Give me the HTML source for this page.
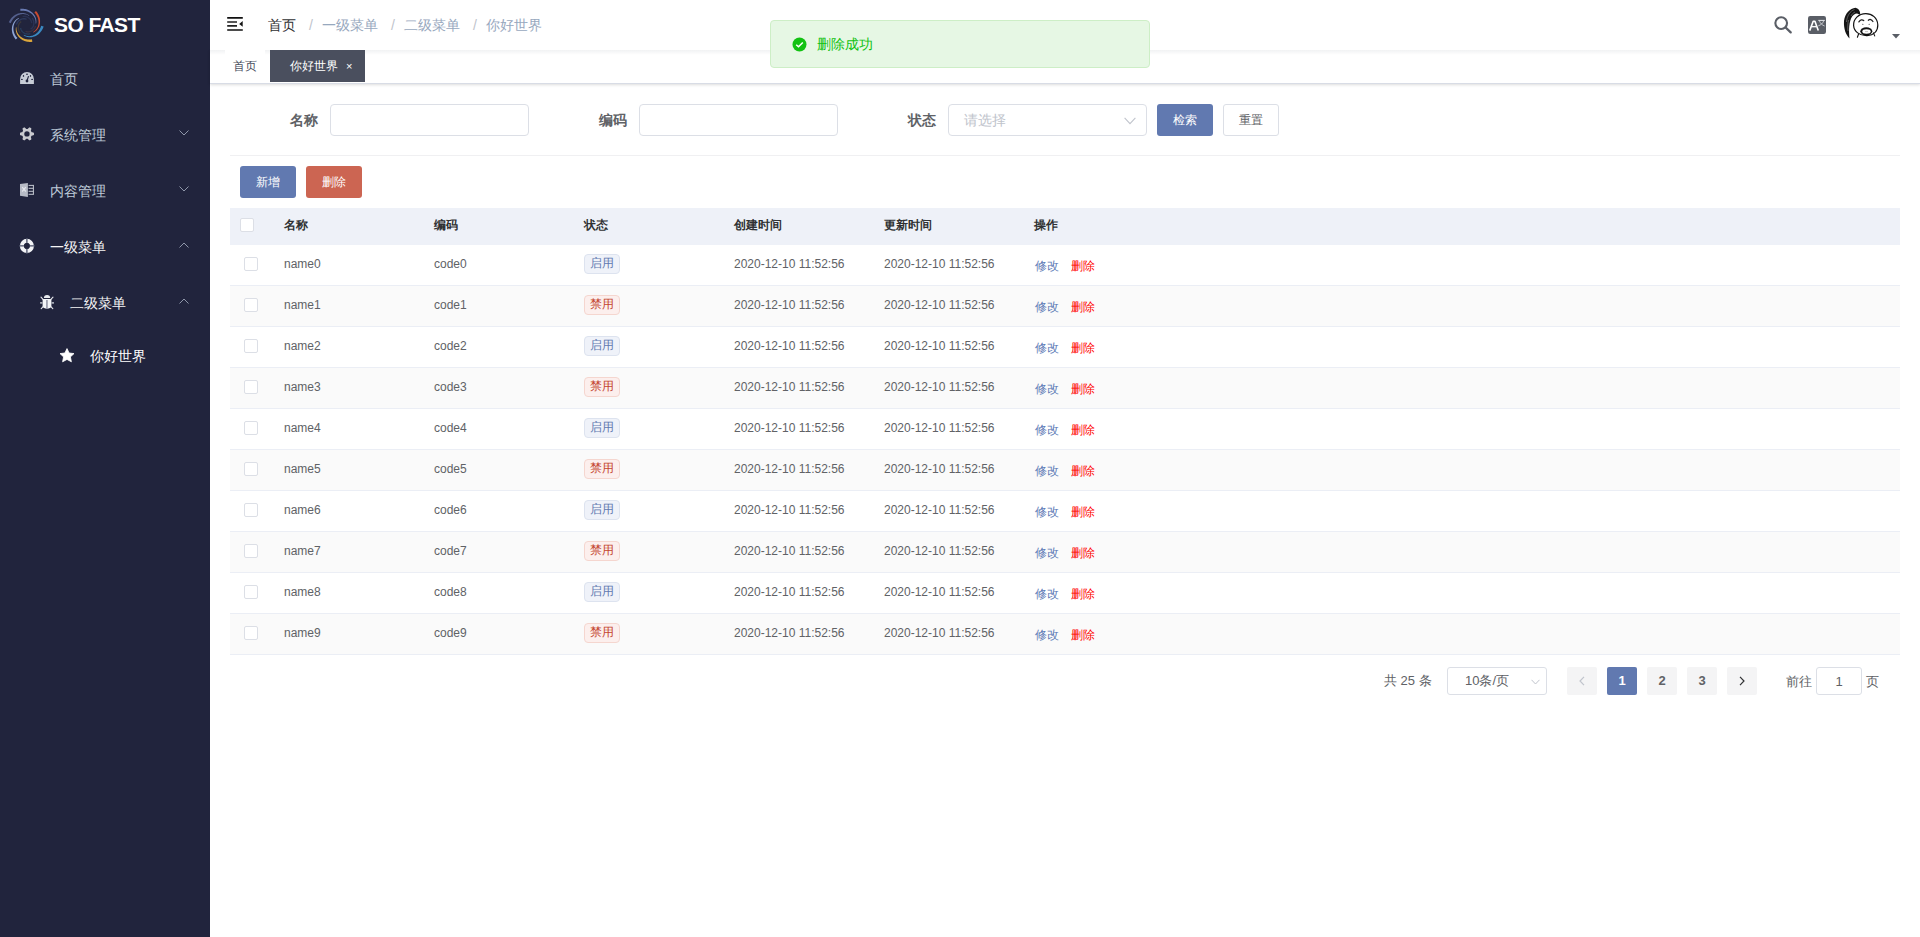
<!DOCTYPE html>
<html><head><meta charset="utf-8">
<style>
*{box-sizing:border-box;margin:0;padding:0}
html,body{width:1920px;height:937px;overflow:hidden;background:#fff;font-family:"Liberation Sans",sans-serif;color:#606266}
.abs{position:absolute}
#side{position:absolute;left:0;top:0;width:210px;height:937px;background:#21243d}
.logo-t{position:absolute;left:54px;top:13px;font-size:21px;font-weight:bold;color:#fff;line-height:24px;letter-spacing:-0.6px}
.mt{position:absolute;font-size:14px;line-height:20px;color:#bfcbd9;white-space:nowrap}
.chev{position:absolute;left:179px}
#nav{position:absolute;left:210px;top:0;width:1710px;height:50px;background:#fff;z-index:2}
.bc{position:absolute;top:15px;line-height:20px;font-size:14px;white-space:nowrap}
.sep{position:absolute;top:15px;line-height:20px;font-size:14px;color:#c0c4cc;font-weight:normal}
#tags{position:absolute;left:210px;top:50px;width:1710px;height:34px;background:#fff;border-bottom:1px solid #d8dce5;box-shadow:0 1px 3px 0 rgba(0,0,0,.12),0 0 3px 0 rgba(0,0,0,.04)}
.tag{position:absolute;top:0;height:32px;line-height:32px;font-size:12px;white-space:nowrap}
.lbl{position:absolute;top:104px;line-height:32px;font-size:14px;color:#606266;font-weight:bold;white-space:nowrap}
.inp{position:absolute;top:104px;height:32px;border:1px solid #dcdfe6;border-radius:4px;background:#fff}
.btn{position:absolute;height:32px;line-height:32px;text-align:center;font-size:12px;border-radius:3px;white-space:nowrap}
.th{position:absolute;top:207px;line-height:36px;font-size:12px;font-weight:bold;color:#303133;white-space:nowrap}
.row{position:absolute;left:230px;width:1670px;height:41px;border-bottom:1px solid #ebeef5;background:#fff}
.row.s{background:#fafafa}
.cell{position:absolute;top:-1px;line-height:40px;font-size:12px;color:#606266;white-space:nowrap}
.cb{position:absolute;width:14px;height:14px;border:1px solid #dcdfe6;border-radius:2px;background:#fff}
.st{position:absolute;top:9px;left:0;height:20px;line-height:17px;padding:0 5px;font-size:12px;border-radius:4px;border:1px solid;white-space:nowrap}
.st.on{background:#eff2f9;border-color:#dde3ef;color:#6179b0}
.st.off{background:#fcefed;border-color:#f5d6cf;color:#c4452f}
.op{position:absolute;top:0px;line-height:42px;font-size:12px;white-space:nowrap}
.pg{position:absolute;top:667px;height:28px;line-height:28px;font-size:13px;white-space:nowrap}
.pb{position:absolute;top:667px;width:30px;height:28px;line-height:28px;text-align:center;font-size:13px;font-weight:bold;background:#f4f4f5;color:#606266;border-radius:2px}
</style></head>
<body>
<div id="side">
  <svg class="abs" style="left:0;top:0" width="52" height="50" viewBox="0 0 52 50">
<path d="M20.53 10.98 L21.43 10.86 L22.32 10.80 L23.21 10.79 L24.08 10.84 L24.94 10.94 L25.78 11.08 L26.60 11.28 L27.40 11.52 L28.17 11.81 L28.91 12.14 L29.62 12.51 L30.30 12.92 L30.94 13.36 L31.55 13.84 L32.12 14.34 L32.65 14.87 L33.14 15.43 L33.58 16.01 L33.99 16.60 L34.35 17.21 L34.67 17.83 L34.94 18.47 L35.17 19.10 L35.36 19.75 L35.50 20.39 L35.60 21.03 L35.66 21.67 L35.68 22.29 L35.66 22.91 L35.60 23.52 L36.09 23.61 L36.21 22.98 L36.29 22.32 L36.33 21.66 L36.33 20.97 L36.28 20.28 L36.18 19.57 L36.03 18.86 L35.84 18.15 L35.60 17.44 L35.30 16.74 L34.96 16.04 L34.56 15.35 L34.12 14.68 L33.63 14.03 L33.08 13.40 L32.49 12.79 L31.85 12.21 L31.17 11.67 L30.44 11.16 L29.67 10.70 L28.86 10.27 L28.01 9.89 L27.13 9.56 L26.22 9.28 L25.28 9.05 L24.31 8.88 L23.32 8.77 L22.31 8.71 L21.29 8.72 L20.25 8.80Z" fill="#6a7bb3"/>
<path d="M34.37 12.46 L34.99 13.12 L35.57 13.80 L36.10 14.51 L36.57 15.25 L37.00 16.00 L37.37 16.77 L37.70 17.54 L37.97 18.33 L38.19 19.12 L38.36 19.92 L38.48 20.71 L38.54 21.50 L38.56 22.28 L38.54 23.05 L38.46 23.81 L38.34 24.55 L38.18 25.27 L37.98 25.97 L37.73 26.65 L37.45 27.30 L37.13 27.92 L36.78 28.52 L36.40 29.08 L35.99 29.61 L35.56 30.10 L35.10 30.56 L34.62 30.98 L34.12 31.37 L33.61 31.71 L33.08 32.02 L33.30 32.47 L33.88 32.20 L34.46 31.88 L35.02 31.52 L35.57 31.11 L36.10 30.66 L36.62 30.17 L37.11 29.63 L37.57 29.06 L38.00 28.44 L38.40 27.79 L38.76 27.10 L39.08 26.38 L39.36 25.63 L39.60 24.84 L39.79 24.03 L39.94 23.20 L40.03 22.34 L40.06 21.47 L40.05 20.58 L39.97 19.69 L39.84 18.78 L39.65 17.87 L39.40 16.96 L39.09 16.06 L38.72 15.16 L38.29 14.28 L37.80 13.41 L37.25 12.57 L36.64 11.74 L35.97 10.95Z" fill="#cc4b2f"/>
<path d="M41.13 25.81 L40.89 26.67 L40.61 27.51 L40.28 28.32 L39.91 29.10 L39.50 29.84 L39.04 30.56 L38.55 31.23 L38.03 31.87 L37.48 32.46 L36.89 33.02 L36.28 33.53 L35.65 33.99 L35.00 34.41 L34.34 34.79 L33.66 35.12 L32.97 35.40 L32.28 35.64 L31.58 35.83 L30.88 35.98 L30.18 36.08 L29.49 36.13 L28.80 36.15 L28.13 36.12 L27.46 36.04 L26.82 35.93 L26.19 35.78 L25.58 35.60 L24.99 35.37 L24.43 35.12 L23.89 34.83 L23.61 35.25 L24.14 35.62 L24.71 35.95 L25.31 36.25 L25.94 36.52 L26.60 36.76 L27.29 36.95 L28.00 37.10 L28.73 37.20 L29.48 37.26 L30.25 37.28 L31.03 37.24 L31.83 37.15 L32.62 37.01 L33.43 36.81 L34.23 36.56 L35.02 36.26 L35.81 35.90 L36.59 35.48 L37.35 35.01 L38.09 34.49 L38.81 33.91 L39.50 33.28 L40.17 32.59 L40.79 31.86 L41.38 31.08 L41.93 30.25 L42.43 29.37 L42.88 28.46 L43.28 27.50 L43.63 26.51Z" fill="#3a88c0"/>
<path d="M31.93 39.22 L31.05 39.38 L30.17 39.48 L29.30 39.52 L28.44 39.51 L27.59 39.45 L26.75 39.34 L25.93 39.18 L25.13 38.98 L24.36 38.73 L23.61 38.43 L22.89 38.10 L22.20 37.72 L21.54 37.31 L20.92 36.87 L20.34 36.39 L19.79 35.89 L19.28 35.36 L18.81 34.81 L18.38 34.23 L18.00 33.64 L17.65 33.04 L17.35 32.42 L17.10 31.80 L16.88 31.17 L16.71 30.53 L16.58 29.90 L16.49 29.27 L16.44 28.64 L16.43 28.02 L16.47 27.41 L15.97 27.34 L15.87 27.98 L15.80 28.63 L15.78 29.30 L15.80 29.99 L15.87 30.68 L15.99 31.39 L16.15 32.10 L16.37 32.81 L16.63 33.51 L16.94 34.22 L17.31 34.91 L17.72 35.59 L18.19 36.25 L18.70 36.90 L19.27 37.52 L19.88 38.11 L20.54 38.67 L21.25 39.20 L21.99 39.69 L22.78 40.14 L23.61 40.55 L24.48 40.91 L25.38 41.22 L26.31 41.48 L27.27 41.68 L28.25 41.83 L29.25 41.91 L30.27 41.93 L31.31 41.89 L32.35 41.79Z" fill="#dba63c"/>
<path d="M17.41 37.99 L16.80 37.32 L16.23 36.63 L15.72 35.91 L15.25 35.17 L14.84 34.41 L14.48 33.63 L14.17 32.85 L13.91 32.06 L13.71 31.26 L13.55 30.46 L13.45 29.67 L13.39 28.88 L13.39 28.10 L13.43 27.33 L13.51 26.57 L13.65 25.84 L13.82 25.12 L14.04 24.42 L14.29 23.75 L14.59 23.10 L14.91 22.48 L15.27 21.90 L15.67 21.34 L16.08 20.82 L16.53 20.33 L16.99 19.88 L17.48 19.47 L17.98 19.09 L18.50 18.75 L19.03 18.46 L18.82 18.00 L18.24 18.27 L17.66 18.57 L17.09 18.93 L16.53 19.32 L15.99 19.76 L15.47 20.25 L14.97 20.77 L14.50 21.34 L14.06 21.95 L13.65 22.59 L13.27 23.27 L12.94 23.99 L12.64 24.74 L12.39 25.52 L12.19 26.33 L12.03 27.16 L11.92 28.01 L11.87 28.88 L11.87 29.77 L11.93 30.67 L12.05 31.58 L12.22 32.49 L12.45 33.40 L12.75 34.31 L13.10 35.21 L13.52 36.10 L13.99 36.98 L14.53 37.84 L15.13 38.67 L15.78 39.48Z" fill="#8ea5d5"/>
<path d="M10.82 23.14 L11.16 22.30 L11.54 21.49 L11.96 20.71 L12.42 19.97 L12.92 19.26 L13.46 18.60 L14.03 17.98 L14.63 17.40 L15.25 16.86 L15.90 16.38 L16.57 15.93 L17.25 15.54 L17.95 15.19 L18.66 14.89 L19.38 14.64 L20.10 14.43 L20.83 14.27 L21.55 14.16 L22.26 14.10 L22.97 14.08 L23.67 14.10 L24.36 14.17 L25.03 14.28 L25.68 14.42 L26.31 14.61 L26.92 14.83 L27.51 15.09 L28.07 15.37 L28.60 15.69 L29.10 16.04 L29.41 15.65 L28.92 15.24 L28.39 14.85 L27.82 14.50 L27.22 14.17 L26.59 13.88 L25.93 13.62 L25.24 13.40 L24.52 13.23 L23.78 13.10 L23.02 13.01 L22.24 12.97 L21.45 12.99 L20.65 13.05 L19.84 13.17 L19.02 13.33 L18.21 13.56 L17.39 13.84 L16.59 14.17 L15.79 14.56 L15.01 15.01 L14.24 15.51 L13.50 16.07 L12.78 16.68 L12.09 17.34 L11.44 18.05 L10.82 18.82 L10.24 19.63 L9.70 20.49 L9.22 21.39 L8.78 22.33Z" fill="#55618f"/>
<path d="M32.11 18.02 L32.54 18.65 L32.91 19.30 L33.21 19.96 L33.46 20.64 L33.65 21.32 L33.78 22.00 L33.85 22.67 L33.86 23.34 L33.82 23.99 L33.72 24.62 L33.57 25.23 L33.38 25.82 L33.15 26.37 L32.87 26.89 L32.56 27.37 L32.21 27.81 L31.84 28.21 L31.44 28.57 L31.03 28.89 L30.60 29.16" stroke="#2c3558" stroke-width="1.3" fill="none"/>
<path d="M35.48 25.96 L35.22 26.68 L34.92 27.36 L34.56 28.00 L34.16 28.60 L33.72 29.15 L33.24 29.65 L32.74 30.11 L32.20 30.51 L31.65 30.85 L31.08 31.15 L30.51 31.39 L29.92 31.58 L29.34 31.71 L28.75 31.79 L28.18 31.82 L27.62 31.80 L27.08 31.74 L26.55 31.63 L26.05 31.47 L25.58 31.29" stroke="#3a3042" stroke-width="1.3" fill="none"/>
<path d="M30.31 33.76 L29.57 33.92 L28.83 34.00 L28.10 34.03 L27.38 33.99 L26.68 33.90 L26.00 33.75 L25.35 33.55 L24.73 33.30 L24.15 33.01 L23.61 32.67 L23.10 32.30 L22.64 31.89 L22.22 31.46 L21.86 31.00 L21.54 30.53 L21.26 30.04 L21.04 29.54 L20.86 29.03 L20.73 28.53 L20.65 28.02" stroke="#283c5c" stroke-width="1.3" fill="none"/>
<path d="M20.15 32.79 L19.70 32.18 L19.31 31.54 L18.98 30.89 L18.70 30.22 L18.49 29.55 L18.34 28.87 L18.25 28.20 L18.21 27.53 L18.23 26.88 L18.31 26.24 L18.43 25.63 L18.60 25.04 L18.82 24.48 L19.08 23.95 L19.38 23.46 L19.70 23.01 L20.06 22.59 L20.45 22.22 L20.85 21.89 L21.27 21.61" stroke="#3c3a3a" stroke-width="1.3" fill="none"/>
<path d="M16.54 24.47 L16.80 23.76 L17.12 23.09 L17.49 22.45 L17.90 21.86 L18.35 21.32 L18.83 20.82 L19.35 20.38 L19.89 19.99 L20.45 19.65 L21.02 19.36 L21.60 19.13 L22.19 18.96 L22.78 18.83 L23.36 18.76 L23.93 18.74 L24.49 18.77 L25.04 18.85 L25.56 18.97 L26.05 19.13 L26.52 19.32" stroke="#2e3a5e" stroke-width="1.3" fill="none"/>
<path d="M22.60 16.43 L23.35 16.36 L24.10 16.35 L24.83 16.40 L25.54 16.51 L26.23 16.68 L26.88 16.90 L27.51 17.16 L28.10 17.48 L28.65 17.83 L29.15 18.22 L29.61 18.64 L30.03 19.09 L30.40 19.57 L30.72 20.06 L30.99 20.57 L31.21 21.08 L31.38 21.60 L31.50 22.12 L31.57 22.64 L31.60 23.15" stroke="#2a3254" stroke-width="1.3" fill="none"/>
</svg>
  <div class="logo-t">SO FAST</div>

  <!-- 首页 -->
  <svg class="abs" style="left:20px;top:71px" width="15" height="14" viewBox="0 0 15 14">
    <path d="M0.1 8 A6.9 6.9 0 0 1 13.9 8 V12.9 H0.1 Z" fill="#c7ccd6"/>
    <circle cx="7" cy="10" r="1.4" fill="#21243d"/>
    <path d="M7 10 L8.5 5.2" stroke="#21243d" stroke-width="1.1"/>
    <ellipse cx="1.9" cy="8.4" rx="0.9" ry="0.7" fill="#21243d"/>
    <ellipse cx="3.5" cy="4.9" rx="0.7" ry="0.9" fill="#21243d"/>
    <ellipse cx="7" cy="3.3" rx="0.9" ry="0.7" fill="#21243d"/>
    <ellipse cx="10.5" cy="4.9" rx="0.7" ry="0.9" fill="#21243d"/>
    <ellipse cx="12.1" cy="8.4" rx="0.9" ry="0.7" fill="#21243d"/>
  </svg>
  <div class="mt" style="left:50px;top:69px">首页</div>

  <!-- 系统管理 -->
  <svg class="abs" style="left:20px;top:127px" width="15" height="15" viewBox="0 0 15 15">
    <path d="M14.00 6.90 L14.00 7.15 L13.98 7.39 L13.96 7.64 L13.93 7.88 L13.69 8.09 L13.33 8.26 L12.94 8.39 L12.55 8.51 L12.16 8.59 L11.80 8.66 L11.54 8.75 L11.47 8.91 L11.40 9.07 L11.32 9.22 L11.24 9.38 L11.15 9.52 L11.05 9.67 L10.95 9.81 L10.85 9.95 L10.90 10.22 L11.02 10.57 L11.14 10.95 L11.24 11.34 L11.31 11.74 L11.35 12.14 L11.29 12.46 L11.09 12.60 L10.89 12.74 L10.69 12.88 L10.48 13.01 L10.26 13.12 L10.04 13.24 L9.82 13.34 L9.59 13.44 L9.29 13.33 L8.96 13.10 L8.65 12.84 L8.36 12.55 L8.09 12.26 L7.85 11.98 L7.64 11.80 L7.47 11.82 L7.30 11.84 L7.12 11.85 L6.95 11.85 L6.78 11.85 L6.60 11.84 L6.43 11.82 L6.26 11.80 L6.05 11.98 L5.81 12.26 L5.54 12.55 L5.25 12.84 L4.94 13.10 L4.61 13.33 L4.31 13.44 L4.08 13.34 L3.86 13.24 L3.64 13.12 L3.43 13.01 L3.21 12.88 L3.01 12.74 L2.81 12.60 L2.61 12.46 L2.55 12.14 L2.59 11.74 L2.66 11.34 L2.76 10.95 L2.88 10.57 L3.00 10.22 L3.05 9.95 L2.95 9.81 L2.85 9.67 L2.75 9.52 L2.66 9.38 L2.58 9.22 L2.50 9.07 L2.43 8.91 L2.36 8.75 L2.10 8.66 L1.74 8.59 L1.35 8.51 L0.96 8.39 L0.57 8.26 L0.21 8.09 L-0.03 7.88 L-0.06 7.64 L-0.08 7.39 L-0.10 7.15 L-0.10 6.90 L-0.10 6.65 L-0.08 6.41 L-0.06 6.16 L-0.03 5.92 L0.21 5.71 L0.57 5.54 L0.96 5.41 L1.35 5.29 L1.74 5.21 L2.10 5.14 L2.36 5.05 L2.43 4.89 L2.50 4.73 L2.58 4.58 L2.66 4.42 L2.75 4.28 L2.85 4.13 L2.95 3.99 L3.05 3.85 L3.00 3.58 L2.88 3.23 L2.76 2.85 L2.66 2.46 L2.59 2.06 L2.55 1.66 L2.61 1.34 L2.81 1.20 L3.01 1.06 L3.21 0.92 L3.42 0.79 L3.64 0.68 L3.86 0.56 L4.08 0.46 L4.31 0.36 L4.61 0.47 L4.94 0.70 L5.25 0.96 L5.54 1.25 L5.81 1.54 L6.05 1.82 L6.26 2.00 L6.43 1.98 L6.60 1.96 L6.78 1.95 L6.95 1.95 L7.12 1.95 L7.30 1.96 L7.47 1.98 L7.64 2.00 L7.85 1.82 L8.09 1.54 L8.36 1.25 L8.65 0.96 L8.96 0.70 L9.29 0.47 L9.59 0.36 L9.82 0.46 L10.04 0.56 L10.26 0.68 L10.48 0.79 L10.69 0.92 L10.89 1.06 L11.09 1.20 L11.29 1.34 L11.35 1.66 L11.31 2.06 L11.24 2.46 L11.14 2.85 L11.02 3.23 L10.90 3.58 L10.85 3.85 L10.95 3.99 L11.05 4.13 L11.15 4.28 L11.24 4.42 L11.32 4.58 L11.40 4.73 L11.47 4.89 L11.54 5.05 L11.80 5.14 L12.16 5.21 L12.55 5.29 L12.94 5.41 L13.33 5.54 L13.69 5.71 L13.93 5.92 L13.96 6.16 L13.98 6.41 L14.00 6.65Z" fill="#c9cacf"/>
    <circle cx="6.95" cy="6.9" r="2.7" fill="#21243d"/>
  </svg>
  <div class="mt" style="left:50px;top:125px">系统管理</div>
  <svg class="chev" style="top:130px" width="10" height="6" viewBox="0 0 10 6"><path d="M0.5 0.5 L5 5 L9.5 0.5" stroke="#8f97aa" stroke-width="1" fill="none"/></svg>

  <!-- 内容管理 -->
  <svg class="abs" style="left:20px;top:182px" width="15" height="15" viewBox="0 0 15 15">
    <path d="M0 2 L7.9 0.9 V14.9 L0 13.7 Z" fill="#b7bbc6"/>
    <path d="M2.2 5.2 L5.8 9.5 M5.8 5.2 L2.2 9.5" stroke="#e4e6ec" stroke-width="1.2"/>
    <path d="M8.6 3.4 H13.4 M8.6 6.3 H13.4 M8.6 9.3 H13.4 M8.6 12.3 H13.4 M13.4 2.9 V12.8" stroke="#c3c7d0" stroke-width="1"/>
  </svg>
  <div class="mt" style="left:50px;top:181px">内容管理</div>
  <svg class="chev" style="top:186px" width="10" height="6" viewBox="0 0 10 6"><path d="M0.5 0.5 L5 5 L9.5 0.5" stroke="#8f97aa" stroke-width="1" fill="none"/></svg>

  <!-- 一级菜单 -->
  <svg class="abs" style="left:19px;top:238px" width="16" height="16" viewBox="0 0 16 16">
    <circle cx="7.9" cy="7.9" r="4.95" stroke="#f2f3f6" stroke-width="4.2" fill="none"/>
    <path d="M7.9 0 V16 M0 7.9 H16" stroke="#4b5068" stroke-width="1.3"/>
    <circle cx="7.9" cy="7.9" r="2.8" fill="#21243d"/>
  </svg>
  <div class="mt" style="left:50px;top:237px;color:#f4f4f5">一级菜单</div>
  <svg class="chev" style="top:242px" width="10" height="6" viewBox="0 0 10 6"><path d="M0.5 5.5 L5 1 L9.5 5.5" stroke="#8f97aa" stroke-width="1" fill="none"/></svg>

  <!-- 二级菜单 -->
  <svg class="abs" style="left:40px;top:295px" width="15" height="15" viewBox="0 0 15 15">
    <path d="M3.9 3 A3.15 2.9 0 0 1 10.2 3 Z" fill="#e8eaef"/>
    <path d="M2.6 4.1 H11.4 V11.2 C11.4 12.8 9 13.7 7 13.7 C5 13.7 2.6 12.8 2.6 11.2 Z" fill="#f4f5f8"/>
    <path d="M6.95 5.1 V13.8" stroke="#7e8294" stroke-width="1.3"/>
    <path d="M0.1 7.9 H2.6 M11.4 7.9 H14" stroke="#a4a8b4" stroke-width="1.6"/>
    <path d="M1 2.2 L3 4.4 M13 2.2 L10.9 4.4 M1.2 13.6 L3.2 11.6 M12.8 13.6 L10.8 11.6" stroke="#e6e8ee" stroke-width="1.1" stroke-linecap="round"/>
  </svg>
  <div class="mt" style="left:70px;top:293px;color:#f4f4f5">二级菜单</div>
  <svg class="chev" style="top:298px" width="10" height="6" viewBox="0 0 10 6"><path d="M0.5 5.5 L5 1 L9.5 5.5" stroke="#8f97aa" stroke-width="1" fill="none"/></svg>

  <!-- 你好世界 -->
  <svg class="abs" style="left:59px;top:347px" width="16" height="16" viewBox="0 0 16 16">
    <path transform="translate(0 0.8)" d="M8 0.8 L10.1 5.2 L15 5.8 L11.4 9.1 L12.4 14 L8 11.6 L3.6 14 L4.6 9.1 L1 5.8 L5.9 5.2 Z" fill="#fff" stroke="#fff" stroke-width="0.8" stroke-linejoin="round"/>
  </svg>
  <div class="mt" style="left:90px;top:346px;color:#fff">你好世界</div>
</div>

<div id="nav">
  <svg class="abs" style="left:17px;top:16px" width="16" height="16" viewBox="0 0 16 16">
    <path d="M0.2 1.9 H15.8 M0.2 14 H15.8" stroke="#111" stroke-width="1.7"/>
    <path d="M0.2 6 H10 M0.2 9.9 H10" stroke="#222" stroke-width="1.7"/>
    <path d="M12.2 7.9 L15.7 5 V10.8 Z" fill="#111"/>
  </svg>
  <div class="bc" style="left:58px;color:#303133">首页</div>
  <div class="sep" style="left:99px">/</div>
  <div class="bc" style="left:112px;color:#97a8be">一级菜单</div>
  <div class="sep" style="left:181px">/</div>
  <div class="bc" style="left:194px;color:#97a8be">二级菜单</div>
  <div class="sep" style="left:263px">/</div>
  <div class="bc" style="left:276px;color:#97a8be">你好世界</div>

  <!-- search -->
  <svg class="abs" style="left:1564px;top:16px" width="19" height="19" viewBox="0 0 19 19">
    <circle cx="7.2" cy="7.1" r="5.85" stroke="#5a5e66" stroke-width="2.1" fill="none"/>
    <path d="M11.6 11.5 L16.7 16.4" stroke="#5a5e66" stroke-width="2.3" stroke-linecap="round"/>
  </svg>
  <!-- language -->
  <svg class="abs" style="left:1598px;top:16px" width="18" height="18" viewBox="0 0 18 18">
    <rect x="0" y="0" width="18" height="18" rx="2.2" fill="#5a5e66"/>
    <path d="M1.7 14.6 L5.2 5.3 H6.9 L10.3 14.6" stroke="#fff" stroke-width="1.6" fill="none" stroke-linejoin="round"/>
    <path d="M3.5 10.7 H8.6" stroke="#fff" stroke-width="1.3"/>
    <path d="M10.3 4.4 H16.8" stroke="#e8e9ec" stroke-width="1"/>
    <path d="M11.4 4.9 C12.5 7.6 14 9 16.6 10 M15.7 4.9 C14.6 7.6 13 9 10.3 9.8" stroke="#dcdee3" stroke-width="0.8" fill="none"/>
  </svg>
  <!-- avatar -->
  <svg class="abs" style="left:1630px;top:5px" width="40" height="40" viewBox="0 0 40 40">
    <path d="M15.5 2.7 C10 3.5 5 8 4 16 C3.5 24 6 30 9.5 33.4 C9 28 8.5 20 11 13.5 C12.5 10 15 8.5 17 8.5 L20.2 9.8 C20.5 7 19 3.5 15.5 2.7 Z" fill="#151515"/>
    <path d="M14.5 4.5 C10 6 7 11 6.5 17 M8 26 C7.5 22 7.8 18 8.5 15 M15 7 C13 8 12 9 11 11" stroke="#8a8a8a" stroke-width="0.6" fill="none"/>
    <path d="M25.8 8.6 C32 8.6 37.6 13 37.8 20 C37.9 26 34 30.2 27 30.6 C19.5 30.8 14 26.5 13.6 20.5 C13.3 14 18.5 8.6 25.8 8.6 Z" fill="#fff" stroke="#111" stroke-width="1.2"/>
    <path d="M18.9 16.9 Q21.3 13.6 23.7 15.6 M28.3 15.2 Q30.8 13.2 32.9 16.5" stroke="#222" stroke-width="1.3" fill="none" stroke-linecap="round"/>
    <ellipse cx="22.8" cy="19.2" rx="0.7" ry="0.5" fill="#555"/><ellipse cx="29.2" cy="19.2" rx="0.7" ry="0.5" fill="#555"/>
    <ellipse cx="26.3" cy="26.3" rx="6" ry="4" fill="#111"/>
    <ellipse cx="26.5" cy="26.5" rx="4.2" ry="2.2" fill="#fff"/>
    <path d="M25 26.6 H28" stroke="#999" stroke-width="0.6"/>
    <path d="M18.5 29.2 L17.4 32.2 M33.4 27.9 L34.7 30.9" stroke="#111" stroke-width="1.1" stroke-linecap="round"/>
  </svg>
  <svg class="abs" style="left:1682px;top:34px" width="8" height="5" viewBox="0 0 8 5"><path d="M0 0 H8 L4 4.5 Z" fill="#5a5e66"/></svg>
</div>

<div id="tags">
  <div class="abs" style="left:0;top:0;width:1710px;height:5px;background:linear-gradient(rgba(0,21,41,0.055),rgba(0,21,41,0))"></div>
  <div class="tag" style="left:15px;top:-1px;width:40px;background:#fff;border:1px solid #fff;text-align:center;color:#495060">首页</div>
  <div class="tag" style="left:60px;width:95px;background:#4a4f5e;color:#fff">
    <span style="position:absolute;left:20px">你好世界</span>
    <span style="position:absolute;left:76px;font-size:11px">×</span>
  </div>
</div>

<!-- toast -->
<div class="abs" style="z-index:3;left:770px;top:20px;width:380px;height:48px;background:#e6f7e4;border:1px solid #cdeec6;border-radius:4px">
  <svg class="abs" style="left:21px;top:16px" width="15" height="15" viewBox="0 0 15 15">
    <circle cx="7.5" cy="7.5" r="7" fill="#12c212"/>
    <path d="M4.2 7.7 L6.5 9.8 L10.8 5.4" stroke="#fff" stroke-width="1.5" fill="none"/>
  </svg>
  <div class="abs" style="left:46px;top:13px;line-height:20px;font-size:14px;color:#12c212">删除成功</div>
</div>

<!-- search form -->
<div class="lbl" style="left:290px">名称</div>
<div class="inp" style="left:330px;width:199px"></div>
<div class="lbl" style="left:599px">编码</div>
<div class="inp" style="left:639px;width:199px"></div>
<div class="lbl" style="left:908px">状态</div>
<div class="inp" style="left:948px;width:199px">
  <div class="abs" style="left:15px;top:0;line-height:30px;font-size:14px;color:#c0c4cc">请选择</div>
  <svg class="abs" style="left:175px;top:12px" width="12" height="8" viewBox="0 0 12 8"><path d="M0.6 0.8 L6 6.6 L11.4 0.8" stroke="#c0c4cc" stroke-width="1.1" fill="none"/></svg>
</div>
<div class="btn" style="left:1157px;top:104px;width:56px;background:#6179b0;color:#fff">检索</div>
<div class="btn" style="left:1223px;top:104px;width:56px;background:#fff;border:1px solid #dcdfe6;line-height:30px;color:#606266">重置</div>
<div class="abs" style="left:230px;top:155px;width:1670px;height:1px;background:#f0f0f2"></div>

<div class="btn" style="left:240px;top:166px;width:56px;background:#6179b0;color:#fff">新增</div>
<div class="btn" style="left:306px;top:166px;width:56px;background:#cc6552;color:#fff">删除</div>

<!-- table header -->
<div class="abs" style="left:230px;top:208px;width:1670px;height:37px;background:#eef1f8"></div>
<div class="cb" style="left:240px;top:218px"></div>
<div class="th" style="left:284px">名称</div>
<div class="th" style="left:434px">编码</div>
<div class="th" style="left:584px">状态</div>
<div class="th" style="left:734px">创建时间</div>
<div class="th" style="left:884px">更新时间</div>
<div class="th" style="left:1034px">操作</div>

<div class="row" style="top:245px">
<div class="cb" style="left:14px;top:12px"></div>
<div class="cell" style="left:54px">name0</div>
<div class="cell" style="left:204px">code0</div>
<div style="position:absolute;left:354px;top:0"><span class="st on">启用</span></div>
<div class="cell" style="left:504px">2020-12-10 11:52:56</div>
<div class="cell" style="left:654px">2020-12-10 11:52:56</div>
<div class="op" style="left:805px;color:#5d7ab6">修改</div>
<div class="op" style="left:841px;color:#ff0000">删除</div>
</div>
<div class="row s" style="top:286px">
<div class="cb" style="left:14px;top:12px"></div>
<div class="cell" style="left:54px">name1</div>
<div class="cell" style="left:204px">code1</div>
<div style="position:absolute;left:354px;top:0"><span class="st off">禁用</span></div>
<div class="cell" style="left:504px">2020-12-10 11:52:56</div>
<div class="cell" style="left:654px">2020-12-10 11:52:56</div>
<div class="op" style="left:805px;color:#5d7ab6">修改</div>
<div class="op" style="left:841px;color:#ff0000">删除</div>
</div>
<div class="row" style="top:327px">
<div class="cb" style="left:14px;top:12px"></div>
<div class="cell" style="left:54px">name2</div>
<div class="cell" style="left:204px">code2</div>
<div style="position:absolute;left:354px;top:0"><span class="st on">启用</span></div>
<div class="cell" style="left:504px">2020-12-10 11:52:56</div>
<div class="cell" style="left:654px">2020-12-10 11:52:56</div>
<div class="op" style="left:805px;color:#5d7ab6">修改</div>
<div class="op" style="left:841px;color:#ff0000">删除</div>
</div>
<div class="row s" style="top:368px">
<div class="cb" style="left:14px;top:12px"></div>
<div class="cell" style="left:54px">name3</div>
<div class="cell" style="left:204px">code3</div>
<div style="position:absolute;left:354px;top:0"><span class="st off">禁用</span></div>
<div class="cell" style="left:504px">2020-12-10 11:52:56</div>
<div class="cell" style="left:654px">2020-12-10 11:52:56</div>
<div class="op" style="left:805px;color:#5d7ab6">修改</div>
<div class="op" style="left:841px;color:#ff0000">删除</div>
</div>
<div class="row" style="top:409px">
<div class="cb" style="left:14px;top:12px"></div>
<div class="cell" style="left:54px">name4</div>
<div class="cell" style="left:204px">code4</div>
<div style="position:absolute;left:354px;top:0"><span class="st on">启用</span></div>
<div class="cell" style="left:504px">2020-12-10 11:52:56</div>
<div class="cell" style="left:654px">2020-12-10 11:52:56</div>
<div class="op" style="left:805px;color:#5d7ab6">修改</div>
<div class="op" style="left:841px;color:#ff0000">删除</div>
</div>
<div class="row s" style="top:450px">
<div class="cb" style="left:14px;top:12px"></div>
<div class="cell" style="left:54px">name5</div>
<div class="cell" style="left:204px">code5</div>
<div style="position:absolute;left:354px;top:0"><span class="st off">禁用</span></div>
<div class="cell" style="left:504px">2020-12-10 11:52:56</div>
<div class="cell" style="left:654px">2020-12-10 11:52:56</div>
<div class="op" style="left:805px;color:#5d7ab6">修改</div>
<div class="op" style="left:841px;color:#ff0000">删除</div>
</div>
<div class="row" style="top:491px">
<div class="cb" style="left:14px;top:12px"></div>
<div class="cell" style="left:54px">name6</div>
<div class="cell" style="left:204px">code6</div>
<div style="position:absolute;left:354px;top:0"><span class="st on">启用</span></div>
<div class="cell" style="left:504px">2020-12-10 11:52:56</div>
<div class="cell" style="left:654px">2020-12-10 11:52:56</div>
<div class="op" style="left:805px;color:#5d7ab6">修改</div>
<div class="op" style="left:841px;color:#ff0000">删除</div>
</div>
<div class="row s" style="top:532px">
<div class="cb" style="left:14px;top:12px"></div>
<div class="cell" style="left:54px">name7</div>
<div class="cell" style="left:204px">code7</div>
<div style="position:absolute;left:354px;top:0"><span class="st off">禁用</span></div>
<div class="cell" style="left:504px">2020-12-10 11:52:56</div>
<div class="cell" style="left:654px">2020-12-10 11:52:56</div>
<div class="op" style="left:805px;color:#5d7ab6">修改</div>
<div class="op" style="left:841px;color:#ff0000">删除</div>
</div>
<div class="row" style="top:573px">
<div class="cb" style="left:14px;top:12px"></div>
<div class="cell" style="left:54px">name8</div>
<div class="cell" style="left:204px">code8</div>
<div style="position:absolute;left:354px;top:0"><span class="st on">启用</span></div>
<div class="cell" style="left:504px">2020-12-10 11:52:56</div>
<div class="cell" style="left:654px">2020-12-10 11:52:56</div>
<div class="op" style="left:805px;color:#5d7ab6">修改</div>
<div class="op" style="left:841px;color:#ff0000">删除</div>
</div>
<div class="row s" style="top:614px">
<div class="cb" style="left:14px;top:12px"></div>
<div class="cell" style="left:54px">name9</div>
<div class="cell" style="left:204px">code9</div>
<div style="position:absolute;left:354px;top:0"><span class="st off">禁用</span></div>
<div class="cell" style="left:504px">2020-12-10 11:52:56</div>
<div class="cell" style="left:654px">2020-12-10 11:52:56</div>
<div class="op" style="left:805px;color:#5d7ab6">修改</div>
<div class="op" style="left:841px;color:#ff0000">删除</div>
</div>

<!-- pagination -->
<div class="pg" style="left:1384px;color:#606266">共 25 条</div>
<div class="abs" style="left:1447px;top:667px;width:100px;height:28px;border:1px solid #dcdfe6;border-radius:3px">
  <div class="abs" style="left:17px;top:0;line-height:26px;font-size:13px;color:#606266">10条/页</div>
  <svg class="abs" style="left:83px;top:11px" width="9" height="6" viewBox="0 0 9 6"><path d="M0.5 0.8 L4.5 5 L8.5 0.8" stroke="#c0c4cc" stroke-width="1" fill="none"/></svg>
</div>
<div class="pb" style="left:1567px"><svg style="position:absolute;left:12px;top:9px" width="6" height="10" viewBox="0 0 6 10"><path d="M5 0.8 L1 5 L5 9.2" stroke="#c0c4cc" stroke-width="1.2" fill="none"/></svg></div>
<div class="pb" style="left:1607px;background:#6179b0;color:#fff">1</div>
<div class="pb" style="left:1647px">2</div>
<div class="pb" style="left:1687px">3</div>
<div class="pb" style="left:1727px"><svg style="position:absolute;left:12px;top:9px" width="6" height="10" viewBox="0 0 6 10"><path d="M1 0.8 L5 5 L1 9.2" stroke="#303133" stroke-width="1.2" fill="none"/></svg></div>
<div class="pg" style="left:1786px;top:668px;color:#606266">前往</div>
<div class="abs" style="left:1816px;top:667px;width:46px;height:28px;border:1px solid #dcdfe6;border-radius:3px;text-align:center;line-height:28px;font-size:13px;color:#606266">1</div>
<div class="pg" style="left:1866px;top:668px;color:#606266">页</div>
</body></html>
